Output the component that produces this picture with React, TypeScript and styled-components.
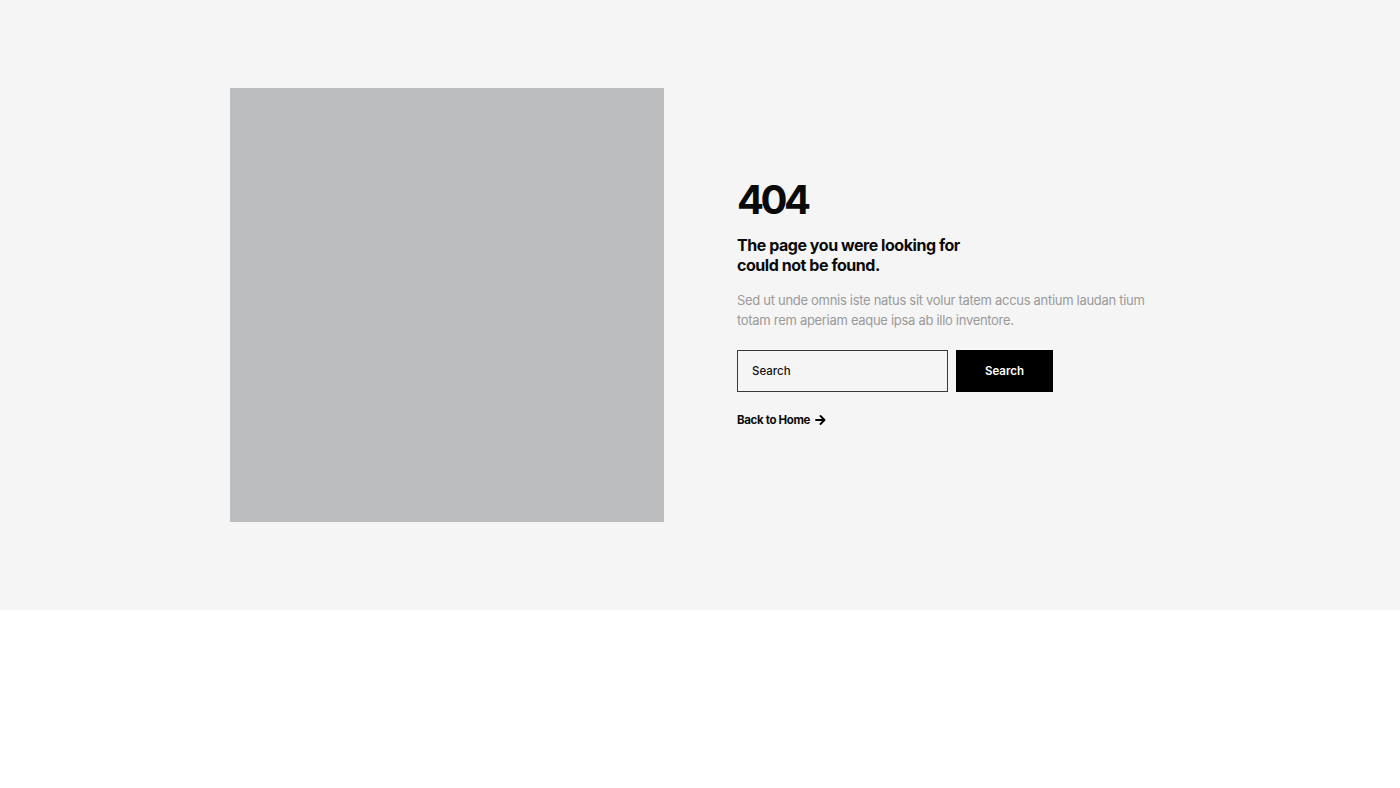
import React from "react";
import styled, { createGlobalStyle } from "styled-components";

const Global = createGlobalStyle`
  html, body { margin: 0; padding: 0; background: #ffffff; }
  body { font-family: "Inter", "Noto Sans", sans-serif; -webkit-font-smoothing: antialiased; }
  * { box-sizing: border-box; }
`;

const Section = styled.section`
  background: #f5f5f5;
  padding: 88px 0;
  height: 610px;
`;

const Container = styled.div`
  display: flex;
  align-items: center;
  gap: 73px;
  margin-left: 230px;
`;

const ImageBox = styled.div`
  width: 434px;
  height: 434px;
  background: #bcbdbe;
  flex-shrink: 0;
`;

const Content = styled.div`
  display: flex;
  flex-direction: column;
  width: 420px;
  padding-bottom: 6px;
`;

const Code = styled.h1`
  margin: 0;
  font-size: 40px;
  line-height: 44px;
  font-weight: 700;
  color: #0a0a0a;
  letter-spacing: -3.5px;
`;

const Title = styled.h2`
  margin: 13px 0 0;
  font-size: 16px;
  line-height: 20px;
  font-weight: 700;
  color: #0a0a0a;
  letter-spacing: -0.45px;
`;

const Text = styled.p`
  margin: 15px 0 0;
  font-size: 13px;
  line-height: 20px;
  font-weight: 400;
  color: #9a9a9a;
  letter-spacing: -0.3px;
`;

const SearchRow = styled.form`
  display: flex;
  gap: 8px;
  margin-top: 20px;
`;

const Input = styled.input`
  width: 211px;
  height: 42px;
  border: 1px solid #3a3a3a;
  background: #f5f5f5;
  padding: 0 14px;
  font-family: inherit;
  font-size: 11.5px;
  font-weight: 500;
  color: #111;
  outline: none;
  &::placeholder { color: #111; }
`;

const Button = styled.button`
  width: 97px;
  height: 42px;
  border: none;
  background: #000;
  color: #fff;
  font-family: inherit;
  font-size: 11.5px;
  font-weight: 600;
  cursor: pointer;
`;

const HomeLink = styled.a`
  display: inline-flex;
  align-items: center;
  gap: 5px;
  margin-top: 21px;
  font-size: 11.5px;
  font-weight: 700;
  color: #0a0a0a;
  text-decoration: none;
  letter-spacing: -0.35px;
`;

export default function App() {
  return (
    <>
      <Global />
      <Section>
        <Container>
          <ImageBox />
          <Content>
            <Code>404</Code>
            <Title>
              The page you were looking for
              <br />
              could not be found.
            </Title>
            <Text>
              Sed ut unde omnis iste natus sit volur tatem accus antium laudan tium totam rem aperiam eaque ipsa ab illo inventore.
            </Text>
            <SearchRow onSubmit={(e) => e.preventDefault()}>
              <Input placeholder="Search" />
              <Button type="submit">Search</Button>
            </SearchRow>
            <HomeLink href="#">
              Back to Home
              <svg width="11" height="10" viewBox="0 0 11 10" fill="none" stroke="#000" strokeWidth="1.8" strokeLinecap="round" strokeLinejoin="round">
                <path d="M1 5h8.5M5.5 1l4 4-4 4" />
              </svg>
            </HomeLink>
          </Content>
        </Container>
      </Section>
    </>
  );
}
